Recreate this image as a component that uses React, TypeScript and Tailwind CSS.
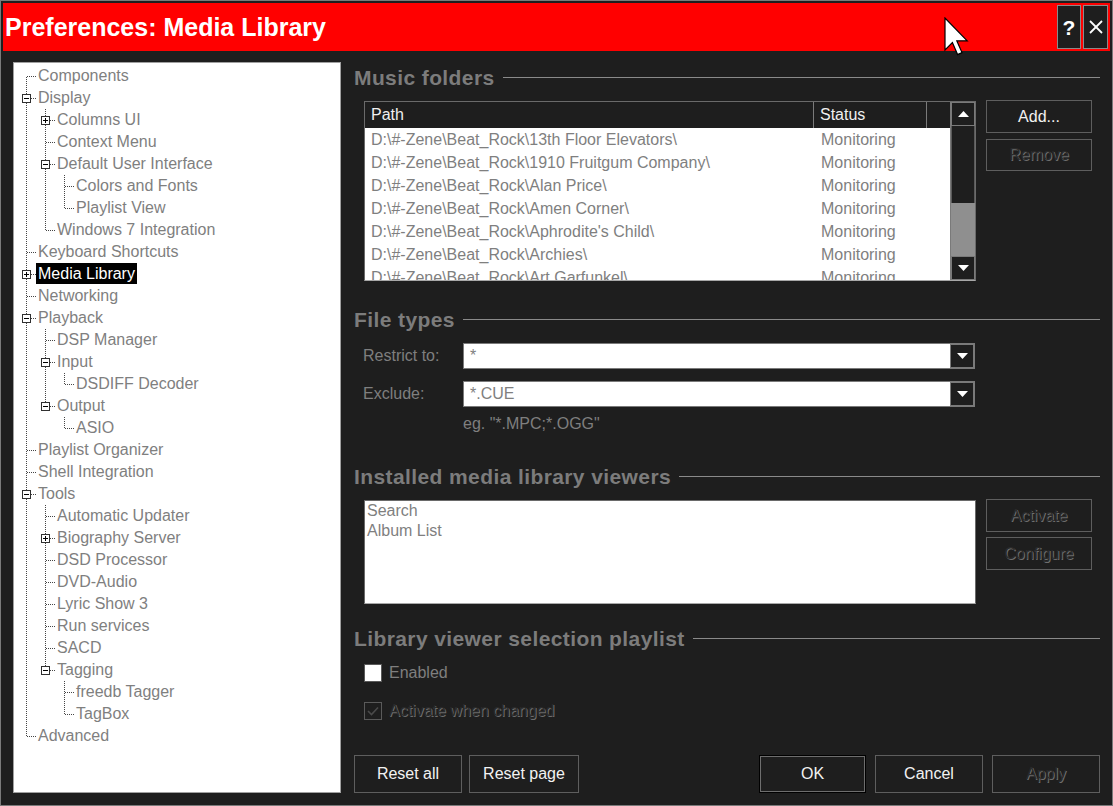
import React from 'react';

type Item = { label: string; depth: number; box?: 'plus' | 'minus'; selected?: boolean };

const items: Item[] = [
  { label: 'Components', depth: 0 },
  { label: 'Display', depth: 0, box: 'minus' },
  { label: 'Columns UI', depth: 1, box: 'plus' },
  { label: 'Context Menu', depth: 1 },
  { label: 'Default User Interface', depth: 1, box: 'minus' },
  { label: 'Colors and Fonts', depth: 2 },
  { label: 'Playlist View', depth: 2 },
  { label: 'Windows 7 Integration', depth: 1 },
  { label: 'Keyboard Shortcuts', depth: 0 },
  { label: 'Media Library', depth: 0, box: 'plus', selected: true },
  { label: 'Networking', depth: 0 },
  { label: 'Playback', depth: 0, box: 'minus' },
  { label: 'DSP Manager', depth: 1 },
  { label: 'Input', depth: 1, box: 'minus' },
  { label: 'DSDIFF Decoder', depth: 2 },
  { label: 'Output', depth: 1, box: 'minus' },
  { label: 'ASIO', depth: 2 },
  { label: 'Playlist Organizer', depth: 0 },
  { label: 'Shell Integration', depth: 0 },
  { label: 'Tools', depth: 0, box: 'minus' },
  { label: 'Automatic Updater', depth: 1 },
  { label: 'Biography Server', depth: 1, box: 'plus' },
  { label: 'DSD Processor', depth: 1 },
  { label: 'DVD-Audio', depth: 1 },
  { label: 'Lyric Show 3', depth: 1 },
  { label: 'Run services', depth: 1 },
  { label: 'SACD', depth: 1 },
  { label: 'Tagging', depth: 1, box: 'minus' },
  { label: 'freedb Tagger', depth: 2 },
  { label: 'TagBox', depth: 2 },
  { label: 'Advanced', depth: 0 },
];

function hasNext(i: number) {
  const d = items[i].depth;
  for (let j = i + 1; j < items.length; j++) {
    if (items[j].depth < d) return false;
    if (items[j].depth === d) return true;
  }
  return false;
}
function ancestorAt(i: number, l: number) {
  for (let j = i - 1; j >= 0; j--) if (items[j].depth === l) return j;
  return -1;
}

const LC = '#454545';

function Conn({ cont, own, first, next, box }: { cont?: boolean; own?: boolean; first?: boolean; next?: boolean; box?: 'plus' | 'minus' }) {
  return (
    <svg width="19" height="22" className="shrink-0" shapeRendering="crispEdges">
      {cont && <line x1="9.5" y1="0" x2="9.5" y2="22" stroke={LC} strokeDasharray="1 1" />}
      {own && (
        <>
          <line x1="9.5" y1={first ? 12 : 0} x2="9.5" y2={next ? 22 : 12} stroke={LC} strokeDasharray="1 1" />
          <line x1={box ? 14 : 10} y1="11.5" x2="19" y2="11.5" stroke={LC} strokeDasharray="1 1" />
          {box && (
            <>
              <rect x="5.5" y="7.5" width="8" height="8" fill="white" stroke="#303030" />
              <line x1="7" y1="11.5" x2="12" y2="11.5" stroke="#000" />
              {box === 'plus' && <line x1="9.5" y1="9" x2="9.5" y2="14" stroke="#000" />}
            </>
          )}
        </>
      )}
    </svg>
  );
}

function Tree() {
  return (
    <div className="w-[328px] h-[731px] bg-white border border-[#a0a0a0] pl-[3px] pt-[2px] overflow-hidden">
      {items.map((it, i) => {
        const cells: React.ReactNode[] = [];
        for (let l = 0; l < it.depth; l++) {
          const a = ancestorAt(i, l);
          cells.push(<Conn key={l} cont={a >= 0 && hasNext(a)} />);
        }
        cells.push(<Conn key="own" own first={i === 0} next={hasNext(i)} box={it.box} />);
        return (
          <div key={i} className="flex h-[22px] items-start">
            {cells}
            <span
              className={`px-[2px] leading-[21px] text-[16px] whitespace-nowrap ${
                it.selected ? 'bg-black text-white' : 'text-[#7f7f7f]'
              }`}
            >
              {it.label}
            </span>
          </div>
        );
      })}
    </div>
  );
}

function Heading({ children, className = '' }: { children: React.ReactNode; className?: string }) {
  return (
    <div className={`flex items-center h-[24px] ${className}`}>
      <span className="text-[21px] font-bold tracking-[0.4px] text-[#7c7c7c] leading-none whitespace-nowrap">{children}</span>
      <div className="flex-1 h-px bg-[#8a8a8a] ml-[8px]" />
    </div>
  );
}

function Btn({ children, disabled, primary, className = '' }: { children: React.ReactNode; disabled?: boolean; primary?: boolean; className?: string }) {
  return (
    <div
      className={`flex items-center justify-center bg-[#1e1e1e] text-[16px] border ${
        primary ? 'border-black shadow-[inset_0_0_0_1px_#6e6e6e]' : 'border-[#5e5e5e]'
      } ${disabled ? 'text-[#2a2a2a] [text-shadow:1px_1px_0_#6e6e6e]' : 'text-[#f2f2f2]'} ${className}`}
    >
      {children}
    </div>
  );
}

function Tri({ up }: { up?: boolean }) {
  return (
    <svg width="11" height="6" viewBox="0 0 11 6">
      {up ? <polygon points="0,6 11,6 5.5,0" fill="white" /> : <polygon points="0,0 11,0 5.5,6" fill="white" />}
    </svg>
  );
}

function Combo({ value }: { value: string }) {
  return (
    <div className="flex h-[26px] w-[512px] border border-[#7a7a7a] bg-white">
      <div className="flex-1 flex items-center pl-[6px] text-[#7f7f7f] text-[16px]">{value}</div>
      <div className="w-[24px] bg-[#1e1e1e] border border-[#7a7a7a] flex items-center justify-center">
        <Tri />
      </div>
    </div>
  );
}

const folders = [
  '13th Floor Elevators',
  '1910 Fruitgum Company',
  'Alan Price',
  'Amen Corner',
  "Aphrodite's Child",
  'Archies',
  'Art Garfunkel',
];

function MusicList() {
  return (
    <div className="ml-[10px] w-[612px] h-[180px] border border-[#6a6a6a] border-b-[#a8a8a8] flex">
      <div className="flex-1 flex flex-col overflow-hidden">
        <div className="h-[26px] bg-[#1e1e1e] flex text-[16px] text-[#f0f0f0] shrink-0">
          <div className="w-[449px] pl-[6px] flex items-center border-r border-[#7a7a7a]">Path</div>
          <div className="w-[113px] pl-[6px] flex items-center border-r border-[#7a7a7a]">Status</div>
        </div>
        <div className="flex-1 bg-white overflow-hidden">
          {folders.map((f) => (
            <div key={f} className="h-[23px] flex items-center text-[16px] text-[#7f7f7f] whitespace-nowrap">
              <div className="w-[449px] pl-[6px]">{'D:\\#-Zene\\Beat_Rock\\' + f + '\\'}</div>
              <div className="pl-[7px]">Monitoring</div>
            </div>
          ))}
        </div>
      </div>
      <div className="w-[25px] flex flex-col bg-[#1e1e1e] border-l border-[#7a7a7a]">
        <div className="h-[24px] border border-[#7a7a7a] flex items-center justify-center">
          <Tri up />
        </div>
        <div className="h-[77px] border-x border-[#5a5a5a]" />
        <div className="h-[53px] bg-[#8f8f8f]" />
        <div className="h-[24px] border border-[#7a7a7a] flex items-center justify-center">
          <Tri />
        </div>
      </div>
    </div>
  );
}

export default function App() {
  return (
    <div className="relative w-[1113px] h-[806px] bg-[#1e1e1e] border border-[#7a7a7a] p-[2px] flex flex-col overflow-hidden font-['Liberation_Sans',_Arial,_sans-serif]">
      {/* Title bar */}
      <div className="h-[48px] bg-[#ff0000] flex items-center shrink-0">
        <span className="pl-[2px] text-[25px] font-bold text-white leading-none whitespace-nowrap">Preferences: Media Library</span>
        <div className="flex-1" />
        <div className="flex gap-[2px] mr-[2px] self-stretch py-[2px]">
          <div className="w-[24px] bg-[#1e1e1e] border border-[#8a8a8a] flex items-center justify-center text-white font-bold text-[21px] leading-none">
            ?
          </div>
          <div className="w-[25px] bg-[#1e1e1e] border border-[#8a8a8a] flex items-center justify-center">
            <svg width="14" height="14" viewBox="0 0 14 14">
              <line x1="1" y1="1" x2="13" y2="13" stroke="white" strokeWidth="1.8" />
              <line x1="13" y1="1" x2="1" y2="13" stroke="white" strokeWidth="1.8" />
            </svg>
          </div>
        </div>
      </div>

      {/* Body */}
      <div className="flex pt-[11px]">
        <div className="ml-[10px]">
          <Tree />
        </div>
        <div className="ml-[13px] w-[746px] flex flex-col pt-[3px]">
          <Heading>Music folders</Heading>
          <div className="flex mt-[12px] items-start">
            <MusicList />
            <div className="ml-[10px] w-[106px] flex flex-col -mt-[1px]">
              <Btn className="h-[33px]">Add...</Btn>
              <Btn disabled className="h-[32px] mt-[6px]">Remove</Btn>
            </div>
          </div>

          <Heading className="mt-[26px]">File types</Heading>
          <div className="flex items-center mt-[12px]">
            <div className="w-[109px] pl-[9px] text-[16px] text-[#7f7f7f]">Restrict to:</div>
            <Combo value="*" />
          </div>
          <div className="flex items-center mt-[12px]">
            <div className="w-[109px] pl-[9px] text-[16px] text-[#7f7f7f]">Exclude:</div>
            <Combo value="*.CUE" />
          </div>
          <div className="mt-[8px] h-[18px] pl-[109px] text-[16px] leading-[18px] text-[#7f7f7f]">eg. "*.MPC;*.OGG"</div>

          <Heading className="mt-[31px]">Installed media library viewers</Heading>
          <div className="flex mt-[12px] items-start">
            <div className="ml-[10px] w-[612px] h-[104px] bg-white border border-[#6a6a6a] border-b-[#a8a8a8] pl-[2px] text-[16px] text-[#7f7f7f] leading-[20px]">
              <div>Search</div>
              <div>Album List</div>
            </div>
            <div className="ml-[10px] w-[106px] flex flex-col -mt-[1px]">
              <Btn disabled className="h-[33px]">Activate</Btn>
              <Btn disabled className="h-[33px] mt-[5px]">Configure</Btn>
            </div>
          </div>

          <Heading className="mt-[22px]">Library viewer selection playlist</Heading>
          <div className="flex items-center h-[22px] mt-[12px] ml-[10px]">
            <div className="w-[18px] h-[18px] bg-white border border-[#5a5a5a]" />
            <span className="ml-[7px] text-[16px] text-[#7f7f7f]">Enabled</span>
          </div>
          <div className="flex items-center h-[22px] mt-[16px] ml-[10px]">
            <div className="w-[18px] h-[18px] bg-[#1e1e1e] border border-[#5a5a5a] flex items-center justify-center">
              <svg width="12" height="10" viewBox="0 0 12 10">
                <polyline points="1,5 4.5,8.5 11,1.5" fill="none" stroke="#4a4a4a" strokeWidth="1.6" />
              </svg>
            </div>
            <span className="ml-[7px] text-[16px] text-[#2a2a2a] [text-shadow:1px_1px_0_#6e6e6e]">Activate when changed</span>
          </div>

          <div className="flex mt-[33px] h-[38px]">
            <Btn className="w-[108px]">Reset all</Btn>
            <Btn className="w-[110px] ml-[7px]">Reset page</Btn>
            <div className="flex-1" />
            <Btn primary className="w-[107px]">OK</Btn>
            <Btn className="w-[108px] ml-[9px]">Cancel</Btn>
            <Btn disabled className="w-[108px] ml-[9px]">Apply</Btn>
          </div>
        </div>
      </div>

      {/* Mouse cursor overlay */}
      <svg className="absolute left-[943px] top-[16px]" width="26" height="40" viewBox="0 0 13 20">
        <polygon
          points="0.5,0.5 0.5,16.5 4.2,12.8 6.8,18.8 9,17.8 6.4,11.9 11.6,11.9"
          fill="white"
          stroke="black"
          strokeWidth="0.6"
          strokeLinejoin="miter"
        />
      </svg>
    </div>
  );
}
